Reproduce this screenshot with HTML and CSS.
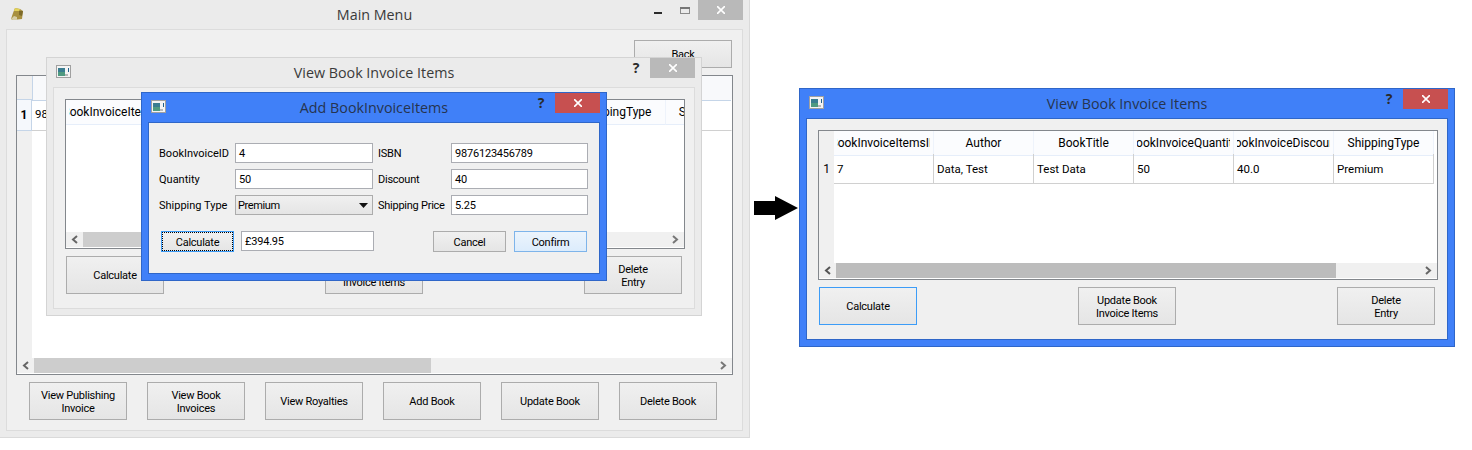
FILE: index.html
```html
<!DOCTYPE html>
<html>
<head>
  <meta charset="utf-8">
  <title>Main Menu</title>
  <link rel="stylesheet" href="styles.css">
</head>
<body>
  <!-- main window, the two dialogs sit on top of it -->
  <div class="window window-main">
    <div class="titlebar">
      <svg class="app-icon" width="13" height="13" viewBox="0 0 13 13">
        <polygon points="4,0 9,1 12,3 11,11 2,12 0,11 2,5" fill="#a8903f"/>
        <polygon points="4,0 9,1 8,3 3,3" fill="#e2d25a"/>
        <polygon points="8,3 12,3 11,8 8,7" fill="#7d6a2a"/>
        <polygon points="0,11 3,8 6,9 6,12 2,12" fill="#d6cda6"/>
      </svg>
      <div class="title">Main Menu</div>
      <div class="controls">
        <svg class="ctl" width="27" height="20" viewBox="0 0 27 20"><rect x="9" y="12" width="8" height="2" fill="#2b2b2b"/></svg>
        <svg class="ctl" width="27" height="20" viewBox="0 0 27 20"><rect x="9.5" y="7.5" width="9" height="6" fill="none" stroke="#8a8a8a"/><rect x="9" y="7" width="10" height="2" fill="#777"/></svg>
        <div class="close close-idle"><svg width="8" height="8" viewBox="0 0 8 8"><path d="M0 0L8 8M8 0L0 8" stroke="#fff" stroke-width="1.6"/></svg></div>
      </div>
    </div>
    <div class="client client-main">
      <div class="back-row"><button class="btn btn-back">Back</button></div>
      <div class="table table-main">
        <div class="viewport viewport-strip">
          <div class="row row-head">
            <div class="corner"></div>
            <div class="th th-sel"><span>ISBN</span></div>
            <div class="th th-sel"><span>BookTitle</span></div>
            <div class="th th-sel"><span>Author</span></div>
            <div class="th th-sel"><span>Genre</span></div>
            <div class="th th-sel"><span>Publisher</span></div>
            <div class="th th-sel"><span>Price</span></div>
            <div class="th th-sel"><span>Stock</span></div>
          </div>
          <div class="row row-body">
            <div class="rh rh-sel">1</div>
            <div class="td">9876123456789</div>
            <div class="td td-open"></div>
            <div class="td td-open"></div>
            <div class="td td-open"></div>
            <div class="td td-open"></div>
            <div class="td td-open"></div>
            <div class="td td-open"></div>
          </div>
        </div>
        <div class="hscroll">
          <svg class="arrow" width="17" height="15" viewBox="0 0 17 15"><path d="M11 4L7 7.5L11 11" fill="none" stroke="#666" stroke-width="2"/></svg>
          <div class="track"><div class="thumb thumb-main"></div></div>
          <svg class="arrow" width="17" height="15" viewBox="0 0 17 15"><path d="M6 4L10 7.5L6 11" fill="none" stroke="#777" stroke-width="2"/></svg>
        </div>
      </div>
      <div class="menu-buttons">
        <button class="btn btn-two">View Publishing<br>Invoice</button>
        <button class="btn btn-two">View Book<br>Invoices</button>
        <button class="btn">View Royalties</button>
        <button class="btn">Add Book</button>
        <button class="btn">Update Book</button>
        <button class="btn">Delete Book</button>
      </div>
    </div>

    <div class="window window-items-behind">
      <div class="titlebar">
        <svg class="win-icon" width="15" height="13" viewBox="0 0 15 13">
          <rect width="15" height="13" fill="#f4f4f4"/>
          <rect x="0.5" y="0.5" width="14" height="12" fill="none" stroke="#a0a0a0"/>
          <rect x="2" y="3" width="7" height="4" fill="#3a7d90"/>
          <rect x="2" y="7" width="7" height="4" fill="#4f9a80"/>
          <rect x="9" y="9" width="3" height="2" fill="#b8b8b8"/>
          <rect x="12" y="3" width="1" height="4" fill="#20608a"/>
        </svg>
        <div class="title">View Book Invoice Items</div>
        <div class="controls">
          <div class="help">?</div>
          <div class="close close-idle"><svg width="8" height="8" viewBox="0 0 8 8"><path d="M0 0L8 8M8 0L0 8" stroke="#fff" stroke-width="1.6"/></svg></div>
        </div>
      </div>
      <div class="client client-items">
        <div class="table table-items">
          <div class="viewport">
            <div class="row row-bare">
              <div class="th"><span>BookInvoiceItemsID</span></div>
              <div class="th"><span>Author</span></div>
              <div class="th"><span>BookTitle</span></div>
              <div class="th"><span>BookInvoiceQuantity</span></div>
              <div class="th"><span>BookInvoiceDiscount</span></div>
              <div class="th"><span>ShippingType</span></div>
              <div class="th"><span>ShippingPrice</span></div>
            </div>
          </div>
          <div class="hscroll">
            <svg class="arrow" width="17" height="15" viewBox="0 0 17 15"><path d="M11 4L7 7.5L11 11" fill="none" stroke="#666" stroke-width="2"/></svg>
            <div class="track"><div class="thumb thumb-items"></div></div>
            <svg class="arrow" width="17" height="15" viewBox="0 0 17 15"><path d="M6 4L10 7.5L6 11" fill="none" stroke="#777" stroke-width="2"/></svg>
          </div>
        </div>
        <div class="item-buttons">
          <button class="btn">Calculate</button>
          <button class="btn btn-two">Update Book<br>Invoice Items</button>
          <button class="btn btn-two">Delete<br>Entry</button>
        </div>
      </div>
    </div>

    <div class="window window-add active">
      <div class="titlebar">
        <svg class="win-icon" width="15" height="13" viewBox="0 0 15 13">
          <rect width="15" height="13" fill="#f4f4f4"/>
          <rect x="0.5" y="0.5" width="14" height="12" fill="none" stroke="#a0a0a0"/>
          <rect x="2" y="3" width="7" height="4" fill="#3a7d90"/>
          <rect x="2" y="7" width="7" height="4" fill="#4f9a80"/>
          <rect x="9" y="9" width="3" height="2" fill="#b8b8b8"/>
          <rect x="12" y="3" width="1" height="4" fill="#20608a"/>
        </svg>
        <div class="title">Add BookInvoiceItems</div>
        <div class="controls">
          <div class="help">?</div>
          <div class="close close-red"><svg width="8" height="8" viewBox="0 0 8 8"><path d="M0 0L8 8M8 0L0 8" stroke="#fff" stroke-width="1.6"/></svg></div>
        </div>
      </div>
      <div class="client client-add">
        <div class="form-grid">
          <label class="lbl">BookInvoiceID</label>
          <div class="field">4</div>
          <label class="lbl lbl-second">ISBN</label>
          <div class="field">9876123456789</div>
          <label class="lbl">Quantity</label>
          <div class="field">50</div>
          <label class="lbl lbl-second">Discount</label>
          <div class="field">40</div>
          <label class="lbl">Shipping Type</label>
          <div class="combo">
            <span>Premium</span>
            <svg width="9" height="5" viewBox="0 0 9 5"><polygon points="0,0 9,0 4.5,5" fill="#111"/></svg>
          </div>
          <label class="lbl lbl-second">Shipping Price</label>
          <div class="field">5.25</div>
        </div>
        <div class="add-footer">
          <button class="btn btn-small btn-focus">Calculate</button>
          <div class="field field-total">£394.95</div>
          <button class="btn btn-small btn-cancel">Cancel</button>
          <button class="btn btn-small btn-confirm">Confirm</button>
        </div>
      </div>
    </div>
  </div>

  <svg class="flow-arrow" width="44" height="24" viewBox="0 0 44 24">
    <polygon points="0,5 21,5 21,0 44,12 21,24 21,19 0,19" fill="#000"/>
  </svg>

  <div class="window window-items active">
    <div class="titlebar">
      <svg class="win-icon" width="15" height="13" viewBox="0 0 15 13">
        <rect width="15" height="13" fill="#f4f4f4"/>
        <rect x="0.5" y="0.5" width="14" height="12" fill="none" stroke="#a0a0a0"/>
        <rect x="2" y="3" width="7" height="4" fill="#3a7d90"/>
        <rect x="2" y="7" width="7" height="4" fill="#4f9a80"/>
        <rect x="9" y="9" width="3" height="2" fill="#b8b8b8"/>
        <rect x="12" y="3" width="1" height="4" fill="#20608a"/>
      </svg>
      <div class="title">View Book Invoice Items</div>
      <div class="controls">
        <div class="help">?</div>
        <div class="close close-red"><svg width="8" height="8" viewBox="0 0 8 8"><path d="M0 0L8 8M8 0L0 8" stroke="#fff" stroke-width="1.6"/></svg></div>
      </div>
    </div>
    <div class="client client-items">
      <div class="table table-items">
        <div class="viewport viewport-strip">
          <div class="row row-head">
            <div class="corner"></div>
            <div class="th"><span>BookInvoiceItemsID</span></div>
            <div class="th"><span>Author</span></div>
            <div class="th"><span>BookTitle</span></div>
            <div class="th"><span>BookInvoiceQuantity</span></div>
            <div class="th"><span>BookInvoiceDiscount</span></div>
            <div class="th"><span>ShippingType</span></div>
          </div>
          <div class="row row-body">
            <div class="rh">1</div>
            <div class="td">7</div>
            <div class="td">Data, Test</div>
            <div class="td">Test Data</div>
            <div class="td">50</div>
            <div class="td">40.0</div>
            <div class="td">Premium</div>
          </div>
        </div>
        <div class="hscroll">
          <svg class="arrow" width="17" height="15" viewBox="0 0 17 15"><path d="M11 4L7 7.5L11 11" fill="none" stroke="#555" stroke-width="2"/></svg>
          <div class="track"><div class="thumb thumb-items thumb-active"></div></div>
          <svg class="arrow" width="17" height="15" viewBox="0 0 17 15"><path d="M6 4L10 7.5L6 11" fill="none" stroke="#666" stroke-width="2"/></svg>
        </div>
      </div>
      <div class="item-buttons">
        <button class="btn btn-default">Calculate</button>
        <button class="btn btn-two">Update Book<br>Invoice Items</button>
        <button class="btn btn-two">Delete<br>Entry</button>
      </div>
    </div>
  </div>
</body>
</html>
```
FILE: styles.css
```css
* {
  box-sizing: border-box;
}

body {
  position: relative;
  margin: 0;
  height: 450px;
  overflow: hidden;
  background: #fff;
  font-family: Roboto, Tahoma, sans-serif;
  font-size: 11px;
  color: #000;
}

/* windows */
.window {
  position: absolute;
  display: flex;
  flex-direction: column;
  background: #ebebeb;
  border: 1px solid #d4d4d4;
}

.window.active {
  background: #4080f8;
  border-color: #2f66c8;
}

.window-main {
  left: -1px;
  top: -1px;
  width: 751px;
  height: 439px;
  border-color: #dadada;
}

.window-items-behind {
  left: 46px;
  top: 57px;
  width: 656px;
  height: 259px;
}

.window-items {
  left: 799px;
  top: 88px;
  width: 656px;
  height: 259px;
}

.window-add {
  left: 141px;
  top: 92px;
  width: 466px;
  height: 189px;
}

.titlebar {
  display: grid;
  grid-template-columns: 1fr auto 1fr;
  height: 29px;
  flex: none;
}

.title {
  align-self: center;
  margin-top: -1px;
  font-family: "Open Sans", "Noto Sans", sans-serif;
  font-size: 14.3px;
  color: #3a3a3a;
}

.active .title {
  color: #26344f;
}

.win-icon {
  margin: 7px 0 0 9px;
}

.app-icon {
  margin: 8px 0 0 11px;
}

.controls {
  display: flex;
  justify-content: flex-end;
  align-items: flex-start;
  margin-right: 6px;
}

.ctl {
  display: block;
  margin-left: -1px;
}

.help {
  width: 16px;
  margin-right: 6px;
  font-family: "Open Sans", sans-serif;
  font-size: 14px;
  font-weight: 700;
  line-height: 20px;
  text-align: center;
  color: #2a2a2a;
}

.close {
  display: flex;
  justify-content: center;
  align-items: center;
  width: 45px;
  height: 20px;
}

.close-idle {
  background: #b9b9b9;
}

.close-red {
  background: #c75050;
}

.client {
  flex: 1;
  margin: 0 6px 6px;
  background: #f0f0f0;
  border: 1px solid #dcdcdc;
}

.active .client {
  border-color: #2f66c8;
}

.client-main {
  padding: 10px 9px 0;
}

.client-items {
  padding: 11px 9px 0 11px;
}

.client-add {
  padding: 20px 12px 0 10px;
}

/* buttons */
.btn {
  display: block;
  width: 98px;
  height: 38px;
  padding: 0;
  background: linear-gradient(#f0f0f0, #e5e5e5);
  border: 1px solid #acacac;
  border-radius: 0;
  font-family: inherit;
  font-size: 11px;
  line-height: 13px;
  letter-spacing: -0.25px;
  color: #000;
}

.btn-two {
  padding-top: 2px;
}

.btn-back {
  height: 28px;
  margin-left: auto;
  margin-right: 1px;
}

.btn-small {
  width: 73px;
  height: 21px;
  padding-top: 2px;
}

.btn-default {
  border-color: #3c9cf7;
}

.btn-focus {
  margin-left: 2px;
  border-color: #3c9cf7;
  outline: 1px dotted #000;
  outline-offset: -2px;
}

.btn-cancel {
  margin-left: auto;
}

.btn-confirm {
  margin-left: 8px;
  background: linear-gradient(#ecf4fc, #dcecfc);
  border-color: #7eb4ea;
}

.back-row {
  height: 28px;
}

.menu-buttons {
  display: grid;
  grid-template-columns: repeat(6, 98px);
  column-gap: 20px;
  margin: 7px 0 0 13px;
}

.item-buttons {
  display: flex;
  justify-content: space-between;
  margin-top: 7px;
  padding: 0 3px 0 1px;
}

/* tables */
.table {
  display: flex;
  flex-direction: column;
  background: #fff;
  border: 1px solid #83878c;
}

.table-main {
  height: 300px;
  margin-top: 7px;
}

.table-items {
  height: 150px;
}

.viewport {
  flex: 1;
  overflow: hidden;
}

.viewport-strip {
  background: linear-gradient(to right, #f0f0f0 15px, #fff 15px);
}

.row {
  display: grid;
  grid-template-columns: 15px repeat(7, 100px);
}

.row-bare {
  grid-template-columns: repeat(7, 100px);
  height: 23px;
}

.row-head {
  height: 23px;
}

.row-body {
  height: 30px;
}

.corner {
  background: #f0f0f0;
}

.th {
  padding: 0 3px;
  background: #fbfcfe;
  border-right: 1px solid #eef3fb;
  border-bottom: 1px solid #e6eefa;
  line-height: 24px;
  font-size: 12px;
}

.th span {
  display: flex;
  justify-content: center;
  overflow: hidden;
  white-space: nowrap;
}

.th-sel {
  background: #f8f9fb;
  border-right-color: #f8f9fb;
  border-bottom-color: #c5d5e8;
}

.th-sel:nth-child(2) {
  border-left: 1px solid #c5d5e8;
}

.rh {
  background: #f0f0f0;
  text-align: center;
  font-size: 12px;
  line-height: 30px;
}

.rh-sel {
  background: #f5f8fc;
  border: 1px solid #c5d5e8;
  border-left-width: 0;
  font-weight: 700;
}

.td {
  padding-left: 3px;
  overflow: hidden;
  white-space: nowrap;
  border-right: 1px solid #d0d0d0;
  border-bottom: 1px solid #d0d0d0;
  font-size: 11.5px;
  line-height: 30px;
}

.td-open {
  border-right-color: #fff;
}

.hscroll {
  display: flex;
  flex: none;
  height: 15px;
  margin-bottom: 1px;
  background: #f0f0f0;
}

.arrow {
  flex: none;
  display: block;
}

.track {
  flex: 1;
}

.thumb {
  height: 15px;
  background: #cdcdcd;
}

.thumb-active {
  background: #bcbcbc;
}

.thumb-main {
  width: 397px;
}

.thumb-items {
  width: 500px;
}

/* add dialog form */
.form-grid {
  display: grid;
  grid-template-columns: 76px 138px 78px 137px;
  grid-auto-rows: 20px;
  row-gap: 6px;
  align-items: center;
}

.lbl-second {
  padding-left: 5px;
  letter-spacing: -0.25px;
}

.field {
  height: 20px;
  padding-left: 3px;
  background: #fff;
  border: 1px solid #abadb3;
  line-height: 20px;
  letter-spacing: -0.2px;
}

.combo {
  display: flex;
  justify-content: space-between;
  align-items: center;
  height: 20px;
  padding: 0 4px 0 2px;
  background: linear-gradient(#f0f0f0, #e5e5e5);
  border: 1px solid #acacac;
  letter-spacing: -0.4px;
}

.add-footer {
  display: flex;
  align-items: flex-start;
  margin-top: 16px;
}

.field-total {
  width: 133px;
  margin-left: 7px;
}

/* arrow between the two screens */
.flow-arrow {
  position: absolute;
  left: 754px;
  top: 196px;
}
```
